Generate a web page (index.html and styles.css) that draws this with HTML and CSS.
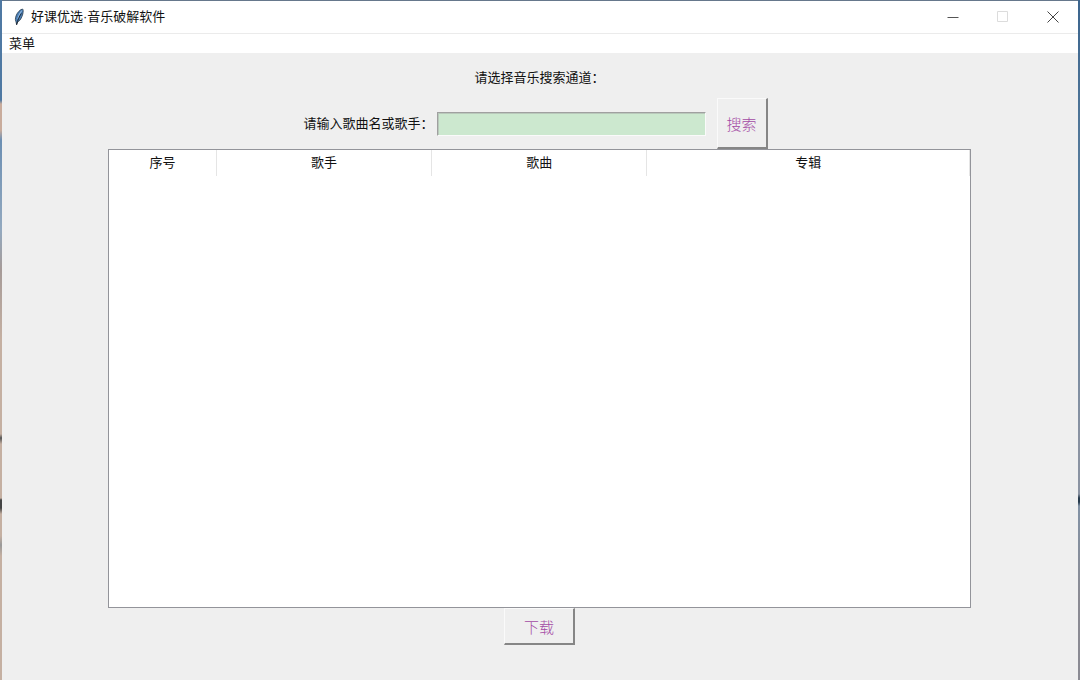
FILE: index.html
```html
<!DOCTYPE html>
<html lang="zh-CN">
<head>
    <meta charset="utf-8">
    <title>好课优选·音乐破解软件</title>
    <link rel="stylesheet" href="styles.css">
</head>
<body>
    <div class="window">
        <header class="titlebar">
            <svg class="feather" width="12" height="18" viewBox="0 0 12 18">
                <path d="M9.5 1C7 1.6 4.2 4.6 3 8C2.2 10.6 2.2 12.6 3 13.8L3.6 16.6L4.6 14C7.2 12.8 8.8 9.6 9.8 6C10.3 3.6 10.4 1.6 9.5 1Z" fill="#4b80b8" stroke="#26384a" stroke-width="0.8"/>
                <path d="M8.8 2.6C7.2 4.4 5.8 7.4 4.8 10.6" fill="none" stroke="#9dc0e2" stroke-width="1"/>
                <path d="M8.4 5.4C6.4 8.4 4.6 12 3.6 16.8" fill="none" stroke="#151c24" stroke-width="0.9"/>
            </svg>
            <h1 class="title">好课优选·音乐破解软件</h1>
            <button class="control" aria-label="最小化">
                <svg width="12" height="12" viewBox="0 0 12 12"><path d="M0.5 6.5H11.5" stroke="#555"/></svg>
            </button>
            <button class="control" aria-label="最大化" disabled>
                <svg width="12" height="12" viewBox="0 0 12 12"><path d="M0.5 0.5H10.5V10.5H0.5Z" fill="none" stroke="#dcdcdc"/></svg>
            </button>
            <button class="control" aria-label="关闭">
                <svg width="12" height="12" viewBox="0 0 12 12"><path d="M0.5 0.5L11.5 11.5M11.5 0.5L0.5 11.5" stroke="#444"/></svg>
            </button>
        </header>
        <nav class="menubar">
            <button class="menu">菜单</button>
        </nav>
        <main class="content">
            <p class="channel">请选择音乐搜索通道：</p>
            <form class="search" onsubmit="return false">
                <label for="keyword">请输入歌曲名或歌手：</label>
                <input class="keyword" id="keyword" type="text">
                <button class="button button-search">搜索</button>
            </form>
            <div class="results">
                <table class="songs">
                    <thead>
                        <tr>
                            <th class="col-id">序号</th>
                            <th class="col-singer">歌手</th>
                            <th class="col-song">歌曲</th>
                            <th class="col-album">专辑</th>
                        </tr>
                    </thead>
                    <tbody></tbody>
                </table>
            </div>
            <button class="button button-download">下载</button>
        </main>
    </div>
</body>
</html>
```

FILE: styles.css
```css
* {
    box-sizing: border-box;
}
/* Desktop showing at the edges of the window */
body {
    margin: 0;
    min-height: 100vh;
    display: flex;
    font-family: "Liberation Sans", "Noto Sans CJK SC", sans-serif;
    font-size: 13px;
    line-height: 20px;
    color: #111;
    background:
        linear-gradient(#4f79a3 0 100px, #c9ac9c 104px 130px, #6c8fb3 140px, #93a9bf 230px, #a69b98 270px, #c5b0a2 340px 434px, #555 438px, #c5b0a2 444px 498px, #444 500px 508px, #c5b0a2 514px 536px, #999 545px, #c5b0a2 556px) left / 2px 100% no-repeat,
        linear-gradient(#3c658e, #5a7f9e 200px, #8b93a2 440px 494px, #273b4d 498px 502px, #8292a5 506px, #8b8b93 600px) #8b8b93;
}
button {
    font-family: inherit;
    color: inherit;
}
.window {
    flex: 1;
    display: flex;
    flex-direction: column;
    margin: 0 2px;
    border-top: 1px solid #66788c;
    background-color: #efefef;
}
.titlebar {
    display: flex;
    align-items: center;
    height: 33px;
    padding-left: 11px;
    background-color: #fff;
    border-bottom: 1px solid #ebebeb;
}
.title {
    flex: 1;
    margin: 0 0 0 6px;
    font-size: 13px;
    font-weight: normal;
}
.control {
    display: flex;
    align-items: center;
    justify-content: center;
    width: 50px;
    height: 32px;
    padding: 0;
    border: none;
    background: none;
}
.menubar {
    display: flex;
    height: 19px;
    background-color: #fff;
}
.menu {
    padding: 0 7px;
    border: none;
    background: none;
    font-size: 13px;
    line-height: 18px;
}
.content {
    flex: 1;
    display: flex;
    flex-direction: column;
    align-items: center;
    padding: 15px 107px 35px 106px;
}
.channel {
    margin: 0 0 10px;
}
.search {
    display: flex;
    align-items: center;
    padding-right: 8px;
}
.keyword {
    width: 269px;
    height: 24px;
    margin: 0 11px 0 3px;
    padding: 1px 4px;
    border: 1px solid;
    border-color: #a0a0a0 #fafafa #fafafa #a0a0a0;
    background-color: #cce8cf;
    box-shadow: inset 1px 1px #b9c9bb;
    font-size: 13px;
    outline: none;
}
.button {
    padding: 0;
    border: 2px solid;
    border-color: #fafafa #868686 #868686 #fafafa;
    border-width: 1px 2px 2px 1px;
    background-color: #efefef;
    color: #a349a4;
    font-family: KaiTi, "Noto Sans CJK SC", sans-serif;
    font-size: 15px;
    font-weight: 300;
}
.button-search {
    width: 51px;
    height: 51px;
}
.button-download {
    width: 71px;
    height: 37px;
}
.results {
    flex: 1;
    width: 100%;
    border: 1px solid #93949a;
    background-color: #fff;
}
.songs {
    width: 100%;
    table-layout: fixed;
    border-collapse: collapse;
}
.songs th {
    height: 26px;
    padding: 0;
    border-right: 1px solid #e5e5e5;
    font-weight: normal;
}
.col-id {
    width: 12.5%;
}
.col-singer,
.col-song {
    width: 25%;
}
.col-album {
    width: 37.5%;
}
```
